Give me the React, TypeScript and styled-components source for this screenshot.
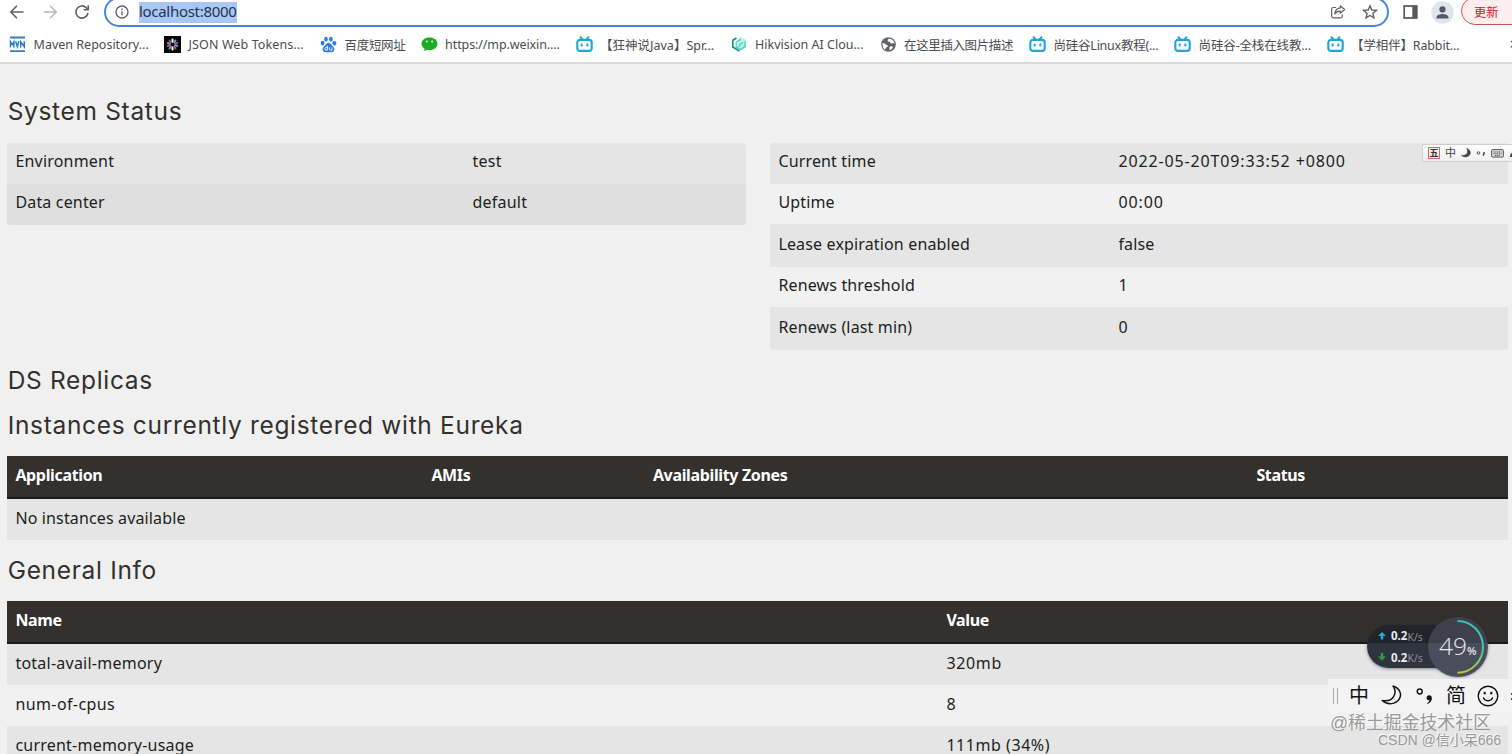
import React from 'react';
import styled, { createGlobalStyle } from 'styled-components';

const Global = createGlobalStyle`
  html, body { margin: 0; height: 100%; overflow: hidden; background: #f0f0f0; }
  * { box-sizing: border-box; }
  svg { display: block; flex: none; }
`;

const Page = styled.div`
  position: relative;
  width: 100%;
  height: 754px;
  overflow: hidden;
  background: #f0f0f0;
  color: #1c1e21;
  font-family: 'Noto Sans', 'Noto Sans CJK SC', sans-serif;
  font-size: 16px;
`;

/* Browser chrome */
const Chrome = styled.header`
  height: 64px;
  background: #fff;
  border-bottom: 2px solid #dadada;
`;
const Toolbar = styled.div`
  height: 27px;
  display: flex;
  align-items: flex-end;
  overflow: hidden;
`;
const NavButtons = styled.div`
  width: 104px;
  height: 30px;
  flex: none;
  padding-left: 8px;
  display: flex;
  align-items: center;
  gap: 14.5px;
`;
const AddressBar = styled.div`
  width: 1285px;
  height: 30px;
  flex: none;
  border: 2px solid #4285e4;
  border-radius: 15px;
  padding: 0 9px;
  display: flex;
  align-items: center;
`;
const Url = styled.span`
  margin-left: 10px;
  height: 21px;
  line-height: 19px;
  font-size: 15px;
  letter-spacing: -0.3px;
  background: #a8c7f5;
  color: #26344d;
`;
const AddressActions = styled.div`
  margin-left: auto;
  display: flex;
  align-items: center;
  gap: 16px;
`;
const ToolbarActions = styled.div`
  height: 30px;
  flex: none;
  margin-left: 13px;
  display: flex;
  align-items: center;
  gap: 12px;
`;
const UpdateButton = styled.div`
  width: 80px;
  height: 28px;
  margin: -3px 0 0 -5px;
  padding-left: 12px;
  border: 1.5px solid #cf5650;
  border-radius: 14px;
  background: #fceeee;
  color: #c5221f;
  font-size: 12.2px;
  line-height: 29px;
`;
const Bookmarks = styled.nav`
  height: 35px;
  padding-left: 9px;
  display: flex;
  align-items: center;
`;
const Bookmark = styled.div<{ $w: number; $track?: number }>`
  width: ${p => p.$w}px;
  flex: none;
  display: flex;
  align-items: center;
  gap: 7.6px;
  white-space: nowrap;
  font-size: 12.5px;
  color: #4a4c50;
  letter-spacing: ${p => p.$track ?? 0}px;
`;

/* Dashboard */
const Main = styled.main`
  padding: 29px 4px 0 7px;
`;
const Heading = styled.h1<{ $mt?: number; $mb?: number }>`
  margin: ${p => p.$mt ?? 0}px 0 ${p => p.$mb ?? 0}px;
  padding-left: 0.7px;
  height: 36px;
  line-height: 36px;
  font-family: Inter, 'Noto Sans', sans-serif;
  font-size: 24.5px;
  font-weight: 400;
  letter-spacing: 0.67px;
  color: #34302d;
`;
const StatusGrid = styled.div`
  display: grid;
  grid-template-columns: 739px 738px;
  column-gap: 24px;
  align-items: start;
`;
const Table = styled.div`
  border-radius: 3px;
  overflow: hidden;
`;
const Row = styled.div<{ $cols: string; $h?: number; $pad?: number; $tone?: 'plain' | 'dark' }>`
  display: grid;
  grid-template-columns: ${p => p.$cols};
  height: ${p => p.$h ?? 41}px;
  padding: ${p => p.$pad ?? 7}px 8px 0 8.4px;
  line-height: 24px;
  background: ${p => (p.$tone === 'plain' ? '#f1f1f1' : p.$tone === 'dark' ? '#dfdfdf' : '#e5e5e5')};
`;
const HeadRow = styled(Row)`
  height: 43px;
  background: #34302d;
  border-bottom: 2px solid #1c1a19;
  color: #fff;
  font-weight: 700;
  letter-spacing: -0.35px;
`;
const Cell = styled.span<{ $track?: number }>`
  white-space: nowrap;
  letter-spacing: ${p => (p.$track === undefined ? 'inherit' : p.$track + 'px')};
`;

/* Floating desktop widgets */
const MiniIme = styled.div`
  position: absolute;
  left: 1422px;
  top: 144px;
  width: 100px;
  height: 18px;
  padding-left: 5px;
  display: flex;
  align-items: center;
  gap: 5px;
  background: linear-gradient(#fdfdfd, #f1f1f1);
  border: 1px solid #cfcfcf;
  font-size: 11px;
  line-height: 16px;
  color: #444;
`;
const WubiKey = styled.span`
  width: 12px;
  height: 12px;
  border: 1px solid #d66;
  background: #fbe9e7;
  color: #333;
  font-size: 9px;
  font-weight: 700;
  line-height: 9px;
  text-align: center;
`;
const SpeedWidget = styled.div`
  position: absolute;
  left: 1367px;
  top: 617px;
  width: 121px;
  height: 60px;
`;
const SpeedPill = styled.div`
  position: absolute;
  left: 0;
  top: 8px;
  width: 92px;
  height: 43px;
  padding-left: 11px;
  display: flex;
  flex-direction: column;
  border-radius: 22px;
  background: linear-gradient(#22242b 0 18px, #30343e 18px);
  box-shadow: 0 1px 3px rgba(40, 40, 60, 0.5);
`;
const SpeedLine = styled.div`
  height: 22px;
  display: flex;
  align-items: center;
  color: #e8eaf0;
  font-size: 11.5px;
  font-weight: 700;
`;
const Unit = styled.span`
  color: #8b8f99;
  font-size: 10.5px;
  font-weight: 400;
  margin-top: 2px;
`;
const Gauge = styled.div`
  position: absolute;
  right: 0;
  top: 0;
  width: 60px;
  height: 60px;
  border-radius: 50%;
  background: linear-gradient(#3e404b 0 26px, #4a4d5b 26px);
  box-shadow: 0 0 3px rgba(40, 40, 60, 0.6);
`;
const GaugeArc = styled.svg`
  position: absolute;
  inset: 0;
`;
const GaugeText = styled.div`
  position: absolute;
  left: 11px;
  top: 12px;
  line-height: 34px;
  color: #e4e7ee;
  font-family: 'Open Sans', sans-serif;
  font-size: 24.5px;
  font-weight: 300;
  white-space: nowrap;
`;
const Percent = styled.span`
  font-size: 11px;
  font-weight: 600;
`;
const ImeStrip = styled.div`
  position: absolute;
  left: 1328px;
  top: 679px;
  width: 184px;
  height: 33px;
  padding-left: 5px;
  display: flex;
  align-items: center;
  background: rgba(243, 243, 243, 0.92);
  color: #111;
  overflow: hidden;
`;
const Grip = styled.span`
  width: 5px;
  height: 16px;
  flex: none;
  margin-right: 11px;
  border: solid #aaa;
  border-width: 0 1.5px;
`;
const ImeGlyph = styled.span`
  width: 20px;
  flex: none;
  font-size: 20px;
  line-height: 28px;
`;
const ImeIcons = styled.span<{ $ml: number; $gap: number }>`
  flex: none;
  margin-left: ${p => p.$ml}px;
  display: flex;
  align-items: center;
  gap: ${p => p.$gap}px;
`;
const Watermark = styled.div<{ $x: number; $y: number; $size: number }>`
  position: absolute;
  left: ${p => p.$x}px;
  top: ${p => p.$y}px;
  font-family: 'Liberation Sans', 'Noto Sans CJK SC', sans-serif;
  font-weight: 400;
  font-size: ${p => p.$size}px;
  line-height: 22px;
  white-space: nowrap;
  color: #999;
  text-shadow: -1px -1px 0 rgba(255, 255, 255, 0.8);
`;

const Line = ({ d, c = '#5f6368' }: { d: string; c?: string }) => (
  <svg width="18" height="18" viewBox="0 0 18 18" fill="none" stroke={c} strokeWidth="1.6">
    <path d={d} />
  </svg>
);

const Bilibili = () => (
  <svg width="17" height="17" viewBox="0 0 17 17" fill="none" stroke="#20a5d8" strokeWidth="2.1" strokeLinecap="round">
    <path d="M4.600 1.300 6.400 3.400M12.400 1.300l-1.800 2.100" />
    <rect x="1.300" y="3.900" width="14.400" height="11" rx="2.600" />
    <path d="M5.700 8.600v1M11.300 8.600v1" />
  </svg>
);
const Maven = () => (
  <svg width="17" height="17" viewBox="0 0 17 17" fill="none" stroke="#2f7cc4">
    <path d="M1 1.500h15M1 15.200h15" strokeWidth="1.800" />
    <path d="M1.500 11.600V5.800l1.700 2.800 1.700-2.800v5.800M6.700 5.200l1.600 5.400 1.600-5.400M11.700 11.600V5.800l3.600 5V5.200" strokeWidth="1.500" />
  </svg>
);
const Jwt = () => (
  <svg width="17" height="17" viewBox="0 0 17 17">
    <path d="M0 0h17v17H0z" fill="#050505" />
    <g strokeWidth="2" strokeLinecap="round">
      <path d="M8.500 3.600v2.200M8.500 11.200v2.200" stroke="#fff" />
      <path d="M11.500 4.500l-1.300 1.800M6.800 10.700l-1.300 1.800" stroke="#2ac5e8" />
      <path d="m13.200 7-2.100.7M5.900 9.300l-2.100.7" stroke="#e0407f" />
      <path d="m13.200 10-2.100-.7M5.900 7.700 3.800 7" stroke="#34b8d6" />
      <path d="m11.500 12.500-1.300-1.800M6.800 6.300 5.500 4.500" stroke="#ee3b5b" />
    </g>
  </svg>
);
const Baidu = () => (
  <svg width="17" height="17" viewBox="0 0 17 17" fill="#2b7be8">
    <ellipse cx="2.600" cy="7.100" rx="1.900" ry="2.300" />
    <ellipse cx="6" cy="3.200" rx="1.800" ry="2.400" />
    <ellipse cx="10.900" cy="3.200" rx="1.800" ry="2.400" />
    <ellipse cx="14.400" cy="7.200" rx="1.900" ry="2.300" />
    <path d="M8.500 6.700c1.700 0 2.400 1.500 3.600 2.800 1.300 1.300 2.700 2.400 2.200 4.500-.6 2.300-2.700 2.200-5.800 2.200s-5.200.1-5.800-2.200c-.5-2.100.9-3.200 2.200-4.500 1.200-1.300 1.900-2.800 3.600-2.800z" />
    <path d="M7.400 9.700v4.500H6.200a1.400 1.400 0 1 1 0-2.800h1.200M9.500 11.400v2c0 .5.300.8.800.8h1.600v-2.800" fill="none" stroke="#fff" strokeWidth=".9" />
  </svg>
);
const WeChat = () => (
  <svg width="17" height="17" viewBox="0 0 17 17">
    <path d="M8.500 1.600c4.600 0 8 2.600 8 6.200s-3.400 6.300-8 6.300c-.9 0-1.800-.1-2.600-.3l-2.800 1.400.5-2.500C1.700 11.600.5 9.800.5 7.800c0-3.600 3.400-6.200 8-6.200z" fill="#1faa1f" />
    <circle cx="5.900" cy="5.600" r="1" fill="#d8f3d4" />
    <circle cx="11.100" cy="5.600" r="1" fill="#d8f3d4" />
  </svg>
);
const Hikvision = () => (
  <svg width="17" height="17" viewBox="0 0 17 17" fill="none">
    <path d="m6.500 3 3.500-2 5 3v7.500L10 14.500l-4-2.500" fill="#b5f3ea" />
    <path d="M5.500 2 1.800 4.200V11L8.500 15" stroke="#178f86" strokeWidth="1.700" />
    <path d="M10 3.200 5.200 6v4.800l4.300 2.500 4.600-2.700V5.600M12 6.500l-3.500 2v2.200" stroke="#45cbbb" strokeWidth="1.200" />
  </svg>
);
const Globe = () => (
  <svg width="17" height="17" viewBox="0 0 17 17">
    <circle cx="8.500" cy="8.500" r="7.300" fill="#5f6368" />
    <path d="M2.500 7c1.500.2 2.500.3 3 1.300s1.800.5 2.300 1.300-.3 1.500-1.500 1.900-.8 1.700-1 2.500C3.300 12.500 2 10 2.500 7zM9 2.600c-1 .9-2 1.500-1.200 2.300s2 .3 2.200 1.400 1.500 1.300 2.600.9 1.500.5 1.900 1c.2-2.500-1.800-5.200-5.500-5.600zM10 10.500c1-.7 2.500-.3 3 .5-.6 1.600-1.800 2.700-3.300 3.200-.2-1.200-.7-2.700.3-3.700z" fill="#fff" />
  </svg>
);
const Moon = ({ s, filled }: { s: number; filled?: boolean }) => (
  <svg width={s} height={s} viewBox="0 0 20 20" fill={filled ? '#444' : 'none'} stroke={filled ? '#444' : '#111'} strokeWidth="1.400" strokeLinejoin="round">
    <path d="M11.500 1c6 1.800 8.800 7.500 6 12.200-3.200 5.300-11.500 6.300-16.300 1.500 4.800.9 8.800-.4 10.800-3.700 2-3.200 1.600-7-.5-10z" />
  </svg>
);

const BOOKMARKS: [React.FC, string, number, number][] = [
  [Maven, 'Maven Repository...', 155, 0],
  [Jwt, 'JSON Web Tokens...', 156, 0.1],
  [Baidu, '百度短网址', 100.5, -0.35],
  [WeChat, 'https://mp.weixin....', 155, -0.1],
  [Bilibili, '【狂神说Java】Spr...', 155, 0],
  [Hikvision, 'Hikvision AI Clou...', 149, 0],
  [Globe, '在这里插入图片描述', 149.5, -0.4],
  [Bilibili, '尚硅谷Linux教程(...', 145, -0.25],
  [Bilibili, '尚硅谷-全栈在线教...', 152.5, -0.15],
  [Bilibili, '【学相伴】Rabbit...', 183, -0.15],
];

const RUNTIME: { name: string; value: string; track: number; h: number; pad: number }[] = [
  { name: 'Current time', value: '2022-05-20T09:33:52 +0800', track: 0.86, h: 41, pad: 6 },
  { name: 'Uptime', value: '00:00', track: 0.9, h: 40, pad: 6 },
  { name: 'Lease expiration enabled', value: 'false', track: 0.15, h: 43, pad: 8 },
  { name: 'Renews threshold', value: '1', track: 0, h: 40, pad: 6 },
  { name: 'Renews (last min)', value: '0', track: 0, h: 43, pad: 8 },
];

const PROPERTY_COLS = '457px 1fr';
const STATUS_COLS = '340px 1fr';
const INSTANCE_COLS = '416px 221.5px 603.5px 1fr';
const INFO_COLS = '931px 1fr';

export default function App() {
  return (
    <Page>
      <Global />
      <Chrome>
        <Toolbar>
          <NavButtons>
            <Line d="M15.500 9H3M9 2.800 2.800 9 9 15.200" />
            <Line d="M2.500 9H15M9 2.800 15.200 9 9 15.200" c="#b9bbbe" />
            <Line d="M15 10A6.100 6.100 0 1 1 13.300 4.700L15 6.400M15.300 2.200v4.600h-4.600" />
          </NavButtons>
          <AddressBar>
            <svg width="14" height="14" viewBox="0 0 14 14" fill="none" stroke="#5f6368" strokeWidth="1.400">
              <circle cx="7" cy="7" r="6" />
              <path d="M7 6.200v4M7 3.600v1.400" />
            </svg>
            <Url>localhost:8000</Url>
            <AddressActions>
              <svg width="16" height="16" viewBox="0 0 16 16" fill="none" stroke="#5f6368" strokeWidth="1.200" strokeLinejoin="round">
                <path d="M6 3.500H3.200C2.200 3.500 1.700 4 1.700 5v7.300c0 1 .5 1.500 1.500 1.500h7.600c1 0 1.500-.5 1.500-1.500v-1.800" />
                <path d="M10.300 1.800 14.600 5.500l-4.300 3.700V7.200C7.800 7.100 6 8 4.800 10c.2-3.300 2-5.800 5.500-6.200z" />
              </svg>
              <svg width="16" height="16" viewBox="0 0 16 16" fill="none" stroke="#5f6368" strokeWidth="1.400">
                <path d="m8 1.800 1.800 4.200 4.600.4-3.500 3 1.100 4.500L8 11.500l-4 2.400 1.100-4.500-3.500-3L6.200 6z" />
              </svg>
            </AddressActions>
          </AddressBar>
          <ToolbarActions>
            <svg width="17" height="16" viewBox="0 0 17 16">
              <rect x="2.200" y="2" width="12.600" height="12" fill="none" stroke="#54585d" strokeWidth="1.700" />
              <path d="M10.300 2h4.500v12h-4.500z" fill="#54585d" />
            </svg>
            <svg width="23" height="23" viewBox="0 0 23 23">
              <circle cx="11.500" cy="11.500" r="11.200" fill="#e1e4ea" />
              <circle cx="11.500" cy="8.400" r="3.100" fill="#50586a" />
              <path d="M5.500 17.500v-1.300c0-2.200 4-3.300 6-3.300s6 1.100 6 3.300v1.300z" fill="#50586a" />
            </svg>
            <UpdateButton>更新</UpdateButton>
          </ToolbarActions>
        </Toolbar>
        <Bookmarks>
          {BOOKMARKS.map(([Icon, label, w, track]) => (
            <Bookmark key={label} $w={w} $track={track}>
              <Icon />
              {label}
            </Bookmark>
          ))}
          <svg width="3" height="9" viewBox="0 0 3 9" fill="none" stroke="#5f6368" strokeWidth="1.300">
            <path d="m1 1 3 3-3 3.500" />
          </svg>
        </Bookmarks>
      </Chrome>

      <Main>
        <Heading $mb={14}>System Status</Heading>
        <StatusGrid>
          <Table>
            <Row $cols={PROPERTY_COLS} $pad={6}>
              <Cell $track={0.2}>Environment</Cell>
              <Cell $track={0.3}>test</Cell>
            </Row>
            <Row $cols={PROPERTY_COLS} $tone="dark" $pad={6}>
              <Cell $track={0.17}>Data center</Cell>
              <Cell $track={0.25}>default</Cell>
            </Row>
          </Table>
          <Table>
            {RUNTIME.map(({ name, value, track, h, pad }, i) => (
              <Row key={name} $cols={STATUS_COLS} $h={h} $pad={pad} $tone={i % 2 ? 'plain' : undefined}>
                <Cell $track={0.15}>{name}</Cell>
                <Cell $track={track}>{value}</Cell>
              </Row>
            ))}
          </Table>
        </StatusGrid>
        <Heading $mt={12} $mb={9}>DS Replicas</Heading>
        <Heading $mb={13}>Instances currently registered with Eureka</Heading>
        <HeadRow $cols={INSTANCE_COLS}>
          <Cell>Application</Cell>
          <Cell>AMIs</Cell>
          <Cell>Availability Zones</Cell>
          <Cell>Status</Cell>
        </HeadRow>
        <Row $cols="1fr">
          <Cell $track={0.14}>No instances available</Cell>
        </Row>
        <Heading $mt={12} $mb={13}>General Info</Heading>
        <HeadRow $cols={INFO_COLS}>
          <Cell>Name</Cell>
          <Cell>Value</Cell>
        </HeadRow>
        <Row $cols={INFO_COLS}>
          <Cell $track={0.24}>total-avail-memory</Cell>
          <Cell $track={0.65}>320mb</Cell>
        </Row>
        <Row $cols={INFO_COLS} $tone="plain">
          <Cell $track={0.4}>num-of-cpus</Cell>
          <Cell>8</Cell>
        </Row>
        <Row $cols={INFO_COLS}>
          <Cell $track={0.22}>current-memory-usage</Cell>
          <Cell $track={0.55}>111mb (34%)</Cell>
        </Row>
      </Main>

      <MiniIme>
        <WubiKey>五</WubiKey>
        <span>中</span>
        <Moon s={10} filled />
        <svg width="10" height="10" viewBox="0 0 10 10">
          <circle cx="2.500" cy="5" r="1.300" fill="none" stroke="#555" />
          <path d="M8 4v1.500c0 1-.5 1.500-1.200 2" stroke="#444" strokeWidth="1.500" fill="none" />
        </svg>
        <svg width="13" height="9" viewBox="0 0 13 9">
          <rect x=".6" y=".6" width="11.800" height="7.500" rx="1" fill="#ddd" stroke="#555" />
          <path d="M2.500 3h8M2.500 4.800h8M4 6.500h5" stroke="#555" strokeDasharray="1.200 .6" />
        </svg>
        <svg width="8" height="10" viewBox="0 0 8 10" fill="#444">
          <path d="M1 9c0-3 1-4 3-4s3 1 3 4z" />
        </svg>
      </MiniIme>

      <SpeedWidget>
        <SpeedPill>
          <SpeedLine>
            <svg width="13" height="8" viewBox="0 0 13 8"><path d="M4 0 0 4h2.800v3.500h2.400V4H8z" fill="#2fa8d0" /></svg>
            0.2<Unit>K/s</Unit>
          </SpeedLine>
          <SpeedLine>
            <svg width="13" height="8" viewBox="0 0 13 8"><path d="M4 7.500 0 3.500h2.800V0h2.400v3.500H8z" fill="#2f9e44" /></svg>
            0.2<Unit>K/s</Unit>
          </SpeedLine>
        </SpeedPill>
        <Gauge>
          <GaugeArc width="60" height="60" viewBox="0 0 60 60" fill="none" strokeWidth="2">
            <defs>
              <linearGradient id="gaugeArc" x1="0" y1="0" x2="0" y2="1">
                <stop offset="0" stopColor="#35c4b4" />
                <stop offset=".6" stopColor="#4cc8a0" />
                <stop offset="1" stopColor="#c0c832" />
              </linearGradient>
            </defs>
            <path d="M29.500 4a25.500 25.800 0 0 1 0 51.700" stroke="url(#gaugeArc)" />
          </GaugeArc>
          <GaugeText>49<Percent>%</Percent></GaugeText>
        </Gauge>
      </SpeedWidget>

      <ImeStrip>
        <Grip />
        <ImeGlyph>中</ImeGlyph>
        <ImeIcons $ml={12} $gap={14}>
          <Moon s={21} />
          <svg width="18" height="20" viewBox="0 0 18 20">
            <circle cx="3.700" cy="5.500" r="2.500" fill="none" stroke="#111" strokeWidth="1.400" />
            <path d="M13 9.300c1.800 0 2.900 1.200 2.900 3 0 2.600-1.700 4.700-4.400 5.700l-.4-.8c1.500-.8 2.300-1.800 2.400-2.900-1.600.2-2.900-.8-2.900-2.400 0-1.500 1-2.600 2.400-2.600z" fill="#111" />
          </svg>
        </ImeIcons>
        <ImeIcons $ml={12} $gap={11}>
          <ImeGlyph>简</ImeGlyph>
          <svg width="22" height="22" viewBox="0 0 22 22" fill="none" stroke="#111" strokeWidth="1.400" strokeLinecap="round">
            <circle cx="11" cy="11" r="9.800" />
            <path d="M6.500 13c1.700 3.600 7.300 3.600 9 0" />
            <path d="M7.700 7.800v.6M14.300 7.800v.6" strokeWidth="2.200" />
          </svg>
          <svg width="10" height="20" viewBox="0 0 10 20" fill="none" stroke="#111" strokeWidth="1.500">
            <path d="M1 8h5M1 13h5M3 6v9" />
          </svg>
        </ImeIcons>
      </ImeStrip>
      <Watermark $x={1330} $y={712} $size={17.85}>@稀土掘金技术社区</Watermark>
      <Watermark $x={1378} $y={729} $size={14}>CSDN @信小呆666</Watermark>
    </Page>
  );
}
